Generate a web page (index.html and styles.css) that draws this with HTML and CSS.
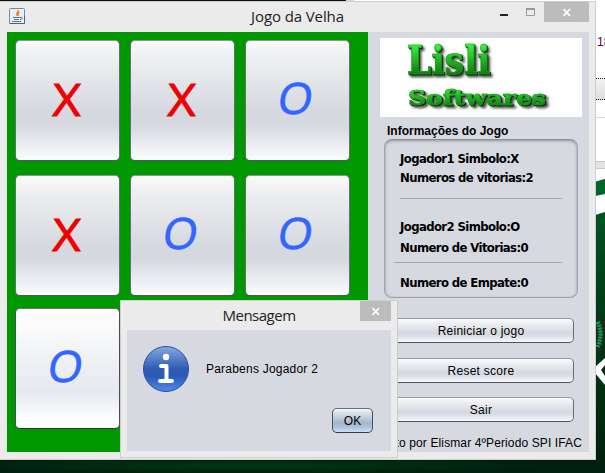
FILE: index.html
```
<!DOCTYPE html>
<html lang="pt-BR">
<head>
<meta charset="utf-8">
<title>Jogo da Velha</title>
<link rel="stylesheet" href="styles.css">
</head>
<body>
<main class="desktop">
  <svg class="wallpaper" width="605" height="473" viewBox="0 0 605 473">
    <defs>
      <radialGradient id="glow" cx="0.42" cy="0.5" r="0.5"><stop offset="0" stop-color="#003814"/><stop offset="1" stop-color="#00200d"/></radialGradient>
      <linearGradient id="right" x2="0" y2="1"><stop offset="0" stop-color="#00622a"/><stop offset="0.35" stop-color="#00441a"/><stop offset="1" stop-color="#00200c"/></linearGradient>
      <linearGradient id="bar" x2="0" y2="1"><stop offset="0" stop-color="#f4f4f4"/><stop offset="1" stop-color="#dddddd"/></linearGradient>
    </defs>
    <rect width="605" height="473" fill="#00170a"/>
    <rect y="458" width="605" height="15" fill="url(#glow)"/>
    <rect x="346" width="8" height="2" fill="#d8d8d8"/>
    <rect x="354" width="251" height="180" fill="#fff"/>
    <rect x="595" y="168" width="10" height="292" fill="url(#right)"/>
    <path d="M595 168h10v11l-10 3z" fill="#fff"/>
    <path d="M595 182l10-3v15l-10 2z" fill="#006629"/>
    <path d="M595 196l10-2v18l-10 3z" fill="#fff"/>
    <ellipse cx="594" cy="335" rx="11" ry="20" fill="#1b2c24"/>
    <path d="M597.500 322q6 12 0 25" fill="none" stroke="#11a552" stroke-width="4" stroke-dasharray="2 1"/>
    <path d="M595 367l10-9v7l-4 5 4 6v9l-10-12z" fill="#fff"/>
    <rect x="596" y="78" width="9" height="22" fill="url(#bar)"/>
    <path d="M596 78.500h9M596 99.500h9" stroke="#222" stroke-dasharray="1 1"/>
    <path d="M596 117.500h9" stroke="#d8d8d8"/>
    <rect x="596" y="161" width="9" height="8" fill="#e4e4e4"/>
    <path d="M596 161.500h9M596 168.500h9" stroke="#c8c8c8"/>
  </svg>
  <span class="behind">18</span>

  <section class="window game">
    <header class="titlebar">
      <svg class="java" width="16" height="16" viewBox="0 0 16 16">
        <rect x=".5" y=".5" width="15" height="15" rx="1" fill="#e8eef3" stroke="#6c8ba4"/>
        <path d="M.5 15.500h15V8" fill="none" stroke="#46687f"/>
        <path d="M9 2c1 2-3 3-1 6M10.500 4c-2 1-2 2-1 4" fill="none" stroke="#e87817" stroke-width="1.200"/>
        <path d="M4 9.500h7M5 11.500h5M3 13.500h9M11 9.500c3-1 3 2 0 2" fill="none" stroke="#55748e"/>
      </svg>
      <h1>Jogo da Velha</h1>
      <svg class="controls" width="90" height="20" viewBox="0 0 90 20">
        <path d="M1 13h8" stroke="#222" stroke-width="2"/>
        <path d="M27.500 6.500h8v7h-8z" fill="none" stroke="#999"/><path d="M27 7h9" stroke="#999" stroke-width="2"/>
        <rect x="45" width="45" height="20" fill="#bcbcbc"/>
        <path d="M64.500 7l6.500 7M71 7l-6.500 7" stroke="#fff" stroke-width="1.700"/>
      </svg>
    </header>
    <div class="content">
      <div class="board">
        <button class="cell x"><span>X</span></button><button class="cell x"><span>X</span></button><button class="cell o"><span>O</span></button>
        <button class="cell x"><span>X</span></button><button class="cell o"><span>O</span></button><button class="cell o"><span>O</span></button>
        <button class="cell o lit"><span>O</span></button>
      </div>
      <aside class="side">
        <div class="logo"><span class="brand">Lisli</span><span class="sub">Softwares</span></div>
        <h2>Informações do Jogo</h2>
        <div class="info">
          <p>Jogador1 Simbolo:X</p>
          <p>Numeros de vitorias:2</p>
          <hr>
          <p class="second">Jogador2 Simbolo:O</p>
          <p class="wins">Numero de Vitorias:0</p>
          <hr class="wide">
          <p class="draws">Numero de Empate:0</p>
        </div>
        <div class="actions">
          <button>Reiniciar o jogo</button>
          <button>Reset score</button>
          <button>Sair</button>
        </div>
        <p class="credit">Feito por Elismar 4ºPeriodo SPI IFAC</p>
      </aside>
    </div>
  </section>

  <section class="window dialog">
    <header class="titlebar">
      <h1>Mensagem</h1>
      <svg class="close" width="31" height="20" viewBox="0 0 31 20"><rect width="31" height="20" fill="#bcbcbc"/><path d="M12.500 7l6.500 7M19 7l-6.500 7" stroke="#fff" stroke-width="1.700"/></svg>
    </header>
    <div class="body">
      <div class="message">
        <svg width="48" height="48" viewBox="0 0 48 48">
          <defs><linearGradient id="ball" x2="0" y2="1"><stop offset="0" stop-color="#88a8df"/><stop offset=".5" stop-color="#2e5cb4"/><stop offset=".65" stop-color="#2b59b5"/><stop offset="1" stop-color="#5287ea"/></linearGradient></defs>
          <circle cx="24" cy="24" r="22.500" fill="url(#ball)" stroke="#2850a0"/>
          <circle cx="24" cy="12" r="3.200" fill="#fff"/>
          <path d="M19 21h5.500v15M18 36h12" fill="none" stroke="#fff" stroke-width="4" stroke-linecap="round" stroke-linejoin="round"/>
        </svg>
        <p>Parabens Jogador 2</p>
      </div>
      <button class="ok">OK</button>
    </div>
  </section>
</main>
</body>
</html>
```
FILE: styles.css
```
* { box-sizing: border-box; margin: 0; padding: 0; }
body { width: 605px; height: 473px; overflow: hidden; font: 12px "Liberation Sans", sans-serif; color: #000; }
button { font: inherit; color: #000; }
.desktop { position: relative; width: 605px; height: 473px; overflow: hidden; }
.wallpaper { display: block; }
.behind { position: absolute; left: 597px; top: 35px; color: #400060; font-size: 12px; }
.window { position: absolute; background: #ebebeb; border: 1px solid #cecece; }
.game { left: -1px; top: 1px; width: 597px; height: 459px; }
.titlebar { display: flex; position: relative; justify-content: center; }
.titlebar h1 { font: 15px "Open Sans", sans-serif; color: #222; white-space: nowrap; letter-spacing: -.1px; }
.game .titlebar { height: 30px; }
.game h1 { line-height: 29px; }
.java { position: absolute; left: 9px; top: 6px; }
.controls { position: absolute; right: 6px; top: 0; }
.content { display: flex; width: 582px; height: 420px; margin-left: 7px; background: #d6d9e0; }
.board { display: grid; width: 361px; padding: 8px; background: #009800; grid-template-columns: repeat(3, 105px); grid-template-rows: 135px 133px 121px; column-gap: 10px; }
.cell { height: 121px; border: 1px solid; border-color: #909198 #6b6c72 #54555c #6b6c72; border-radius: 5px; background: linear-gradient(#fbfbfc 0, #eff0f2 12%, #d5d8df 60%, #d5d8df 70%, #fbfcff 100%); display: flex; align-items: center; justify-content: center; }
.cell span { display: block; line-height: 48px; }
.lit { background: linear-gradient(#fff 0, #f8f9fa 20%, #e5e8ef 70%, #fff 93%); border-color: #707178 #4b4c52 #34353c #4b4c52; }
.x span { font: 45px/48px "Open Sans", sans-serif; color: #f00000; -webkit-text-stroke: 1px #f00000; transform: translate(-1px, -2px) skewX(-2deg) scaleX(1.08); }
.o span { font: 45px/48px "Liberation Sans", sans-serif; color: #3366ff; -webkit-text-stroke: .5px #3366ff; transform: translate(-2px, -2px) skewX(-9deg) scaleX(.97); }
.side { width: 221px; padding: 6px 7px 0 12px; }
.logo { height: 79px; width: 202px; background: #fff; padding-left: 27px; font-family: "DejaVu Serif", serif; font-weight: bold; white-space: nowrap; }
.logo span { display: block; transform-origin: left; color: transparent; background: linear-gradient(#3df23d 15%, #1fa81f 55%, #0c6a0c 90%); -webkit-background-clip: text; background-clip: text; filter: drop-shadow(1px 1px 0 #063006) drop-shadow(2px 2px 1px #555); width: max-content; -webkit-text-stroke: .6px #1c9c1c; }
.brand { font-size: 39px; line-height: 45px; transform: scaleX(.89); }
.sub { font-size: 21px; line-height: 29px; transform: translateX(1px) scaleX(1.19); }
.side h2 { margin: 7px 0 0 7px; font-size: 12px; line-height: 15px; }
.info { width: 194px; height: 159px; margin: 0 0 0 4px; padding: 9px 15px 0 15px; border: 1px solid #a0a3aa; border-top-color: #8d9097; border-radius: 8px; box-shadow: inset 0 1px 3px #8d9097; font: bold 13px "DejaVu Sans Condensed", "DejaVu Sans", sans-serif; letter-spacing: -.62px; white-space: nowrap; }
.info p { line-height: 19px; }
.info hr { border: 0; height: 1px; background: #a5a8b2; margin-top: 11px; }
.info .second { margin-top: 18px; }
.info .wins { margin-top: 2px; }
.info .wide { margin: 5px 0 0 -6px; }
.info .draws { margin-top: 10px; }
.actions { display: flex; flex-direction: column; margin: 20px 0 0 8px; width: 186px; }
.actions button { height: 25px; margin-bottom: 15px; letter-spacing: .25px; border: 1px solid; border-color: #9698a2 #6b6c76 #50515b; border-radius: 5px; background: linear-gradient(#fafafb, #d5d8df 60%, #d8dbe2 70%, #f8f9fd); }
.actions button:nth-child(2) { margin-bottom: 14px; }
.actions button:last-child { margin-bottom: 0; }
.credit { display: flex; justify-content: flex-end; margin-top: 13px; line-height: 16px; letter-spacing: .12px; white-space: nowrap; }
.dialog { left: 120px; top: 300px; width: 278px; height: 158px; }
.dialog .titlebar { height: 29px; }
.dialog h1 { line-height: 29px; letter-spacing: -.5px; }
.close { position: absolute; right: 6px; top: 0; }
.body { width: 264px; height: 121px; margin-left: 6px; background: #d6d9e0; padding: 15px 18px 0 15px; display: flex; flex-direction: column; }
.message { display: flex; align-items: center; gap: 16px; height: 48px; letter-spacing: .22px; }
.ok { align-self: flex-end; width: 41px; height: 25px; margin-top: 15px; border: 1px solid; border-color: #63727f #41505f #2e3d4c; border-radius: 5px; background: linear-gradient(#f0f4f7, #a3b8cb 60%, #aabfd2 75%, #c9dff2); }
```
